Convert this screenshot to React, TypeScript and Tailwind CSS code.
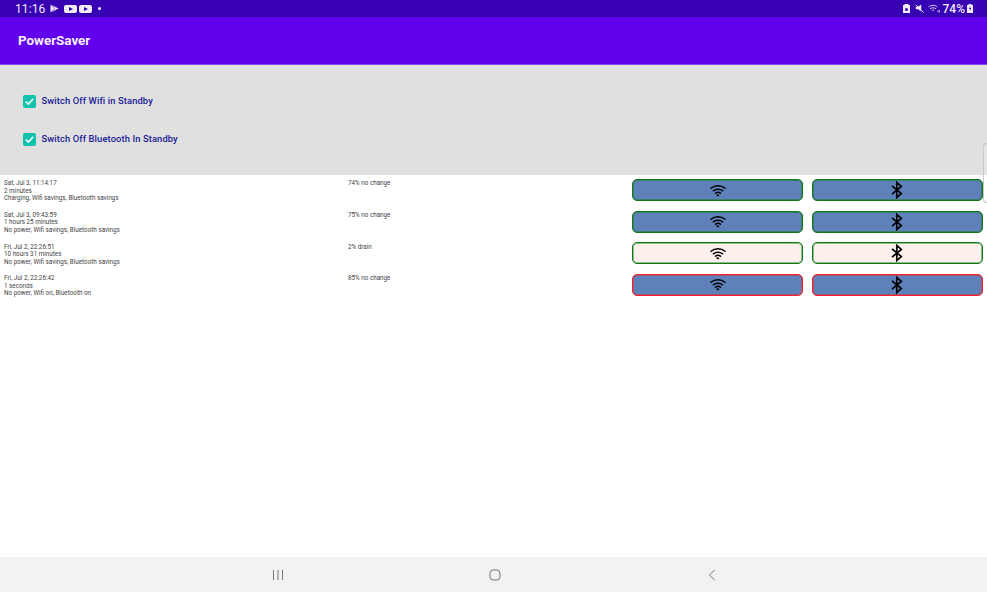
import React from "react";

function Wifi() {
  return (
    <svg width="16" height="13" viewBox="0 0 16 13" fill="none" stroke="#000" strokeWidth="1.5" strokeLinecap="round">
      <path d="M1 4.2C5 .8 11 .8 15 4.2" />
      <path d="M3.4 6.8C6 4.7 10 4.7 12.6 6.8" />
      <path d="M5.6 9.2C7 8.2 9 8.2 10.4 9.2" />
      <path d="M6.9 11l1.1 1.3L9.1 11C8.4 10.5 7.6 10.5 6.9 11Z" fill="#000" strokeWidth="0.6" />
    </svg>
  );
}

function Bluetooth() {
  return (
    <svg className="mr-[1px]" width="12" height="18" viewBox="0 0 12 18" fill="none" stroke="#000" strokeWidth="1.7">
      <path d="M1 4.8L10.3 12.6L5.8 16.6V1.4L10.3 5.4L1 13.2" />
    </svg>
  );
}

const greenEdge = "border-[#0f7a17] shadow-[inset_0_0_0_1px_rgba(15,122,23,0.45)]";
const redEdge = "border-[#f5222d] shadow-[inset_0_0_0_1px_rgba(245,34,45,0.45)]";

const rows = [
  { a: "Sat, Jul 3, 11:14:17", b: "2 minutes", c: "Charging, Wifi savings, Bluetooth savings", d: "74% no change", bg: "bg-[#5e81b9]", edge: greenEdge },
  { a: "Sat, Jul 3, 09:43:59", b: "1 hours 25 minutes", c: "No power, Wifi savings, Bluetooth savings", d: "75% no change", bg: "bg-[#5e81b9]", edge: greenEdge },
  { a: "Fri, Jul 2, 22:26:51", b: "10 hours 31 minutes", c: "No power, Wifi savings, Bluetooth savings", d: "2% drain", bg: "bg-[#fdf0ec]", edge: greenEdge },
  { a: "Fri, Jul 2, 22:26:42", b: "1 seconds", c: "No power, Wifi on, Bluetooth on", d: "85% no change", bg: "bg-[#5e81b9]", edge: redEdge },
];

function Check({ label }: { label: string }) {
  return (
    <div className="flex items-center gap-[5.5px]">
      <div className="w-[13px] h-[13px] rounded-[2px] bg-[#12c2ad] flex items-center justify-center">
        <svg width="11" height="11" viewBox="0 0 11 11" fill="none" stroke="#fff" strokeWidth="1.5">
          <path d="M1.8 5.6L4.4 8.1L9.2 2.8" />
        </svg>
      </div>
      <span className="text-[9.4px] font-medium text-[#1a1a96] tracking-[0.1px]">{label}</span>
    </div>
  );
}

export default function App() {
  return (
    <div className="relative w-[987px] h-[592px] flex flex-col bg-white overflow-hidden font-['Roboto',sans-serif]">
      <div className="h-[17px] shrink-0 bg-[#3700b3] flex items-center justify-between pl-[15px] pr-[14px] text-[#f1ecfb]">
        <div className="flex items-center">
          <span className="text-[12px] leading-none tracking-[0.1px]">11:16</span>
          <svg className="ml-[5px]" width="9" height="9" viewBox="0 0 9 9" fill="#f1ecfb"><path d="M0.5 0.5L8.5 4.5L0.5 8.5Z" /><path d="M1 1L5 4.500L1 8" stroke="#3700b3" strokeWidth="0.5" fill="none" /></svg>
          <div className="ml-[5px] w-[13px] h-[8px] rounded-[2px] bg-[#f1ecfb] flex items-center justify-center"><svg width="4" height="4" viewBox="0 0 4 4" fill="#3700b3"><path d="M0 0L4 2L0 4Z" /></svg></div>
          <div className="ml-[2px] w-[13px] h-[8px] rounded-[2px] bg-[#f1ecfb] flex items-center justify-center"><svg width="4" height="4" viewBox="0 0 4 4" fill="#3700b3"><path d="M0 0L4 2L0 4Z" /></svg></div>
          <div className="ml-[6px] w-[3px] h-[3px] rounded-full bg-[#f1ecfb]" />
        </div>
        <div className="flex items-center">
          <svg width="7" height="9" viewBox="0 0 7 9" fill="#f1ecfb"><path d="M1.500 0H5.500V1H7V9H0V1H1.500Z" /><circle cx="3.500" cy="5.500" r="1.500" fill="#3700b3" /></svg>
          <svg className="ml-[5px]" width="9" height="9" viewBox="0 0 9 9" fill="#f1ecfb" stroke="#f1ecfb"><path d="M1 3H3L6 1V7L3 5H1Z" strokeWidth="0.5" /><path d="M1 1L8.500 8.500" strokeWidth="1" /></svg>
          <svg className="ml-[4px]" width="12" height="9" viewBox="0 0 12 9" fill="none" stroke="#f1ecfb" strokeWidth="0.9"><path d="M0.500 3C3 .8 7 .8 9.500 3" /><path d="M2 4.800C3.500 3.500 6.500 3.500 8 4.800" /><path d="M3.800 6.500C4.500 6 5.500 6 6.200 6.500" /><path d="M10 6V8.500M11.500 6V8.500" strokeWidth="0.7" /></svg>
          <span className="ml-[3px] text-[12px] font-medium leading-none">74%</span>
          <svg className="ml-[2px]" width="6" height="9" viewBox="0 0 6 9" fill="#f1ecfb"><path d="M1.500 0H4.500V1H6V9H0V1H1.500Z" /><path d="M3.200 2L2 5H3L2.800 7L4.200 4H3.200Z" fill="#3700b3" /></svg>
        </div>
      </div>

      <div className="h-[48px] shrink-0 bg-[#6200ee] flex items-center pl-[18px] border-b border-[#8a4df2]">
        <span className="text-[13.400px] font-bold text-[#f6f1ff] pt-[1px]">PowerSaver</span>
      </div>

      <div className="h-[110px] shrink-0 bg-[#e0e0e0] flex flex-col gap-[24px] pl-[23px] pt-[29px]">
        <Check label="Switch Off Wifi in Standby" />
        <Check label="Switch Off Bluetooth In Standby" />
      </div>

      <div className="flex-1 flex flex-col pt-[4px] gap-[9.600px]">
        {rows.map((r) => (
          <div key={r.a} className="h-[22px] flex pl-[4px]">
            <div className="w-[344px] pt-[1.400px] text-[6.300px] leading-[7.500px] text-[#444] whitespace-nowrap">
              <div>{r.a}</div>
              <div>{r.b}</div>
              <div>{r.c}</div>
            </div>
            <div className="w-[284px] pt-[1.400px] text-[6.300px] leading-[7.500px] text-[#444]">{r.d}</div>
            <div className="flex gap-[9px]">
              <div className={`w-[171px] rounded-[5px] border flex items-center justify-center ${r.bg} ${r.edge}`}><Wifi /></div>
              <div className={`w-[171px] rounded-[5px] border flex items-center justify-center ${r.bg} ${r.edge}`}><Bluetooth /></div>
            </div>
          </div>
        ))}
      </div>

      <div className="h-[35px] shrink-0 bg-[#f2f2f2] flex items-center pl-[169px]">
        <div className="w-[217px] flex justify-center">
          <svg width="12" height="12" viewBox="0 0 12 12" stroke="#777" strokeWidth="1"><path d="M1.500 1V11M6 1V11M10.500 1V11" /></svg>
        </div>
        <div className="w-[217px] flex justify-center">
          <svg width="12" height="12" viewBox="0 0 12 12" fill="none" stroke="#777" strokeWidth="1"><rect x="1" y="1" width="10" height="10" rx="3.200" /></svg>
        </div>
        <div className="w-[217px] flex justify-center">
          <svg width="10" height="12" viewBox="0 0 10 12" fill="none" stroke="#777" strokeWidth="1"><path d="M7.500 1L2.500 6L7.500 11" /></svg>
        </div>
      </div>

      <div className="absolute right-0 top-[143px] w-[4px] h-[60px] rounded-l-[4px] border border-r-0 border-[#c8c8c8] bg-white/20" />
    </div>
  );
}
